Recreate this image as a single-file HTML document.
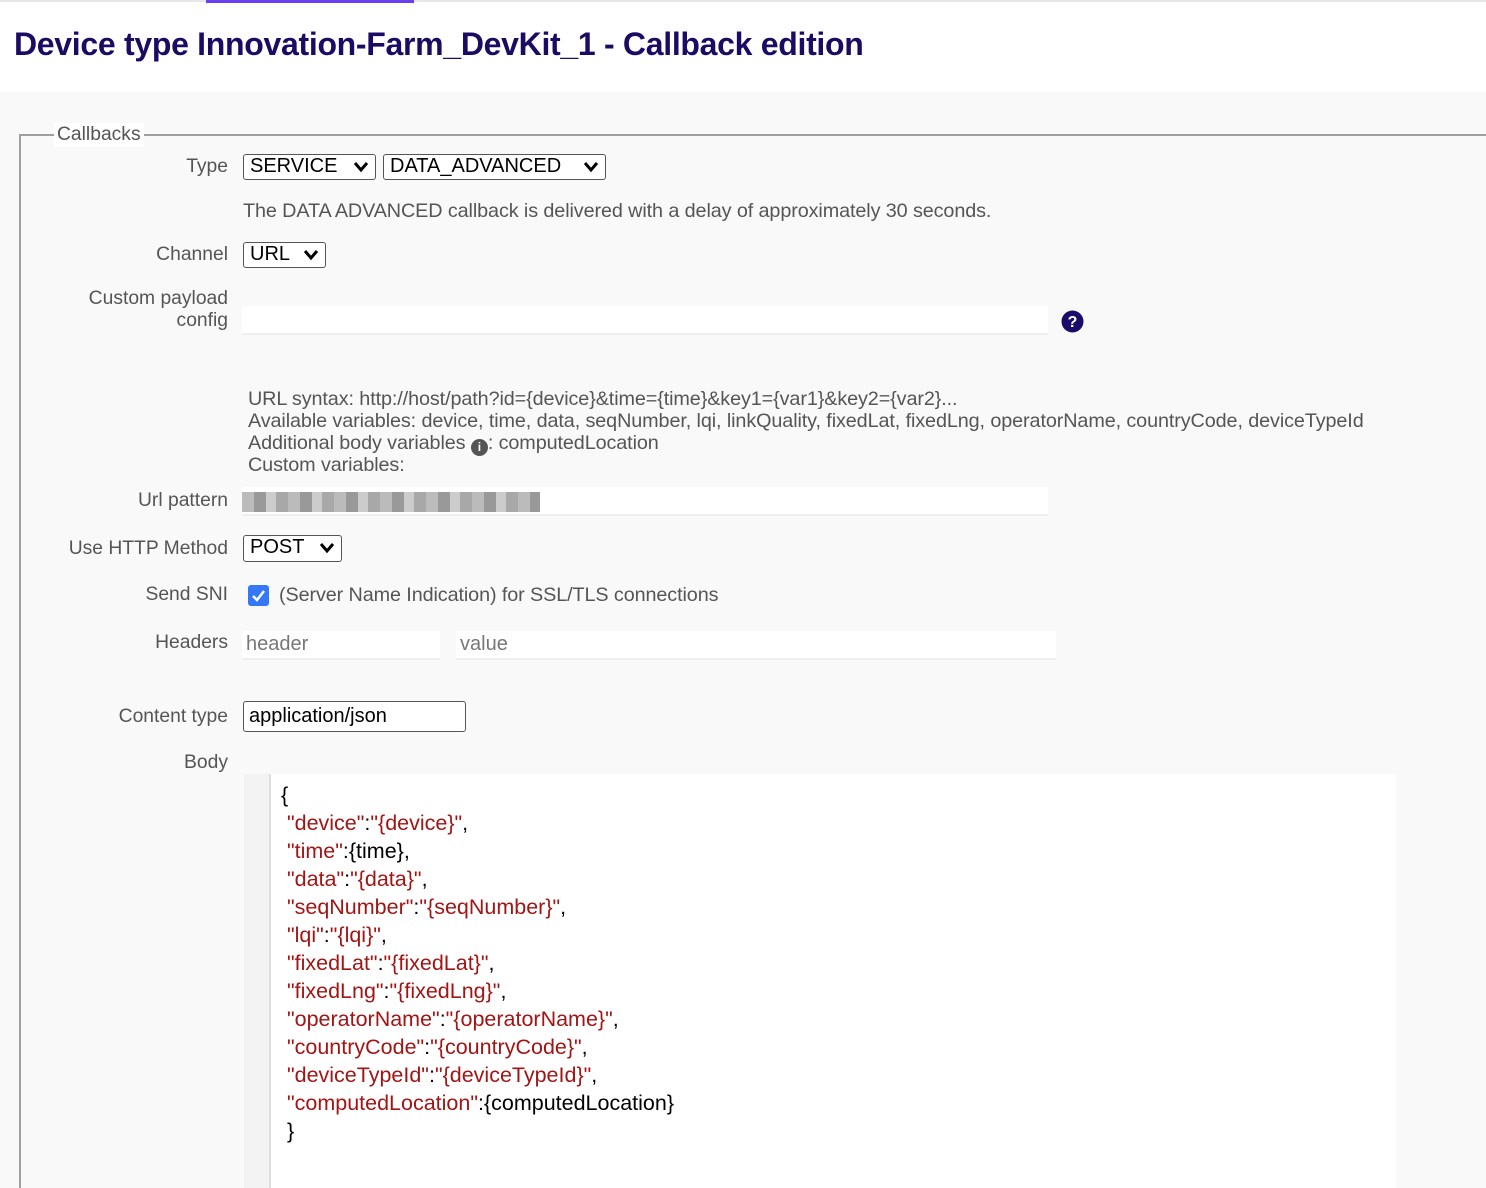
<!DOCTYPE html>
<html><head><meta charset="utf-8"><style>
*{box-sizing:border-box;margin:0;padding:0}
html,body{width:1486px;height:1188px;overflow:hidden}
body{background:#f9f9f9;font-family:"Liberation Sans",sans-serif;position:relative;color:#555}
.a{position:absolute}
.top{left:0;top:0;width:1486px;height:92px;background:#fff}
.lbl{position:absolute;right:1258px;font-size:19.3px;color:#555;white-space:nowrap;text-align:right;line-height:22px}
.sel{position:absolute;border:1.5px solid #555;border-radius:3px;background:#fff;color:#000;font-size:20px;line-height:22px;padding:0 0 0 6px;white-space:nowrap}
.sel svg{position:absolute;right:6px;top:6px}
.inp{position:absolute;background:#fff;border-bottom:2px solid #eee}
.t{position:absolute;font-size:19.8px;color:#555;white-space:nowrap;line-height:22px;letter-spacing:-0.1px}
.code{font-size:21.5px;line-height:28px;color:#000;white-space:pre}
.r{color:#a31515}
</style></head><body>
<div class="a top"></div>
<div class="a" style="left:0;top:0;width:1486px;height:2px;background:#e6e6e6"></div>
<div class="a" style="left:206px;top:0;width:208px;height:3px;background:#6a3ff0"></div>
<div class="a" style="left:14px;top:26px;font-size:32px;font-weight:bold;color:#1c0b63;letter-spacing:-0.3px;white-space:nowrap">Device type Innovation-Farm_DevKit_1 - Callback edition</div>

<div class="a" style="left:19px;top:134px;width:1467px;height:1054px;border-top:2px solid #a0a0a0;border-left:2px solid #a0a0a0"></div>
<div class="a" style="left:54px;top:123px;background:#fff;padding:0 3px;font-size:19.3px;line-height:24px;color:#555">Callbacks</div>

<div class="lbl" style="top:156px">Type</div>
<div class="sel" style="left:243px;top:154px;width:133px;height:26px">SERVICE<svg width="16" height="12" viewBox="0 0 16 12"><path d="M2 2l6 7 6-7" stroke="#000" stroke-width="3" fill="none"/></svg></div>
<div class="sel" style="left:383px;top:154px;width:223px;height:26px">DATA_ADVANCED<svg width="16" height="12" viewBox="0 0 16 12"><path d="M2 2l6 7 6-7" stroke="#000" stroke-width="3" fill="none"/></svg></div>
<div class="t" style="left:243px;top:200px">The DATA ADVANCED callback is delivered with a delay of approximately 30 seconds.</div>

<div class="lbl" style="top:244px">Channel</div>
<div class="sel" style="left:243px;top:242px;width:83px;height:26px">URL<svg width="16" height="12" viewBox="0 0 16 12"><path d="M2 2l6 7 6-7" stroke="#000" stroke-width="3" fill="none"/></svg></div>

<div class="lbl" style="top:288px">Custom payload<br>config</div>
<div class="inp" style="left:242px;top:306px;width:806px;height:29px"></div>
<svg class="a" style="left:1061px;top:310px" width="23" height="23" viewBox="0 0 23 23"><circle cx="11.5" cy="11.5" r="11" fill="#1b0b6b"/><text x="11.5" y="17" font-family="Liberation Sans" font-weight="bold" font-size="16" fill="#fff" text-anchor="middle">?</text></svg>

<div class="t" style="left:248px;top:388px">URL syntax: http://host/path?id={device}&amp;time={time}&amp;key1={var1}&amp;key2={var2}...</div>
<div class="t" style="left:248px;top:410px">Available variables: device, time, data, seqNumber, lqi, linkQuality, fixedLat, fixedLng, operatorName, countryCode, deviceTypeId</div>
<div class="t" style="left:248px;top:432px">Additional body variables <span style="display:inline-block;width:17px;height:17px;border-radius:50%;background:#555;color:#fff;font-size:12px;line-height:17px;text-align:center;font-weight:bold;vertical-align:-2px">i</span>: computedLocation</div>
<div class="t" style="left:248px;top:454px">Custom variables:</div>

<div class="lbl" style="top:490px">Url pattern</div>
<div class="inp" style="left:242px;top:487px;width:806px;height:29px"></div>
<div class="a" style="left:242px;top:492px;width:298px;height:20px;background:repeating-linear-gradient(90deg,#bbb 0 12px,#999 12px 24px,#ccc 24px 34px,#a8a8a8 34px 46px)"></div>

<div class="lbl" style="top:538px">Use HTTP Method</div>
<div class="sel" style="left:243px;top:535px;width:99px;height:27px">POST<svg width="16" height="12" viewBox="0 0 16 12"><path d="M2 2l6 7 6-7" stroke="#000" stroke-width="3" fill="none"/></svg></div>

<div class="lbl" style="top:584px">Send SNI</div>
<svg class="a" style="left:248px;top:585px" width="21" height="21" viewBox="0 0 21 21"><rect width="21" height="21" rx="3" fill="#3478f6"/><path d="M5 11l4 4 7-9" stroke="#fff" stroke-width="2.5" fill="none"/></svg>
<div class="t" style="left:279px;top:584px">(Server Name Indication) for SSL/TLS connections</div>

<div class="lbl" style="top:632px">Headers</div>
<div class="inp" style="left:242px;top:631px;width:198px;height:29px"></div>
<div class="inp" style="left:456px;top:631px;width:600px;height:29px"></div>
<div class="a" style="left:246px;top:633px;font-size:20px;color:#777">header</div>
<div class="a" style="left:460px;top:633px;font-size:20px;color:#777">value</div>

<div class="lbl" style="top:706px">Content type</div>
<div class="a" style="left:243px;top:701px;width:223px;height:31px;border:1.5px solid #555;border-radius:3px;background:#fff;color:#000;font-size:20px;line-height:28px;padding-left:5px">application/json</div>

<div class="lbl" style="top:752px">Body</div>
<div class="a" style="left:244px;top:774px;width:1152px;height:414px;background:#fff"></div>
<div class="a" style="left:244px;top:774px;width:27px;height:414px;background:#f3f3f3;border-right:2px solid #ddd"></div>
<div class="a code" style="left:281px;top:781px">{
 <span class="r">"device"</span>:<span class="r">"{device}"</span>,
 <span class="r">"time"</span>:{time},
 <span class="r">"data"</span>:<span class="r">"{data}"</span>,
 <span class="r">"seqNumber"</span>:<span class="r">"{seqNumber}"</span>,
 <span class="r">"lqi"</span>:<span class="r">"{lqi}"</span>,
 <span class="r">"fixedLat"</span>:<span class="r">"{fixedLat}"</span>,
 <span class="r">"fixedLng"</span>:<span class="r">"{fixedLng}"</span>,
 <span class="r">"operatorName"</span>:<span class="r">"{operatorName}"</span>,
 <span class="r">"countryCode"</span>:<span class="r">"{countryCode}"</span>,
 <span class="r">"deviceTypeId"</span>:<span class="r">"{deviceTypeId}"</span>,
 <span class="r">"computedLocation"</span>:{computedLocation}
 }</div>
</body></html>
